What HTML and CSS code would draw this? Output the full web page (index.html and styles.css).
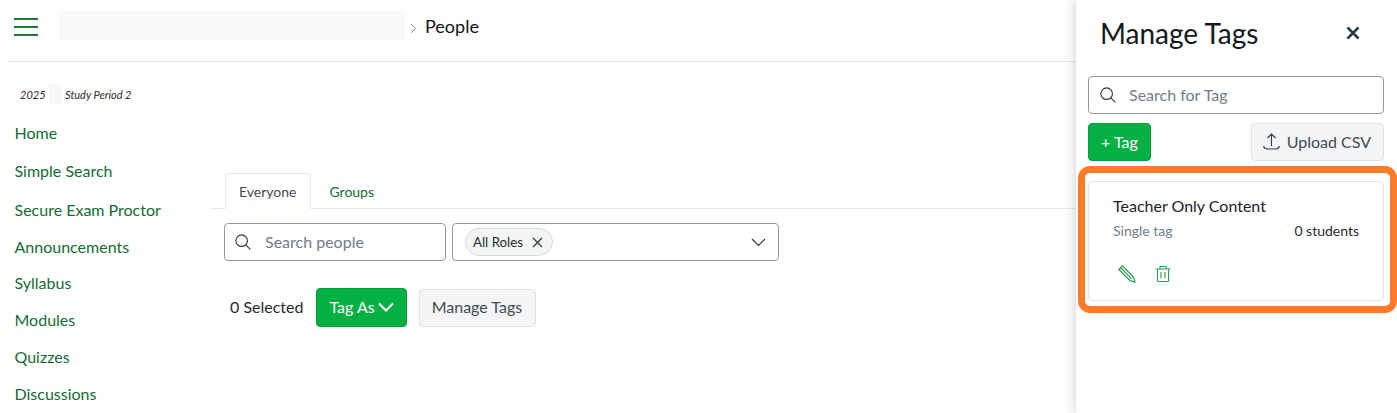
FILE: index.html
```html
<!DOCTYPE html>
<html lang="en">
  <head>
    <meta charset="UTF-8" />
    <title>People</title>
    <link rel="stylesheet" href="styles.css">
  </head>
  <body>
    <div class="page">
      <div class="main">
        <header class="top-bar">
          <div class="hamburger"><span></span><span></span><span></span></div>
          <div class="crumb-blur"></div>
          <svg class="crumb-chevron" width="7" height="11" viewBox="0 0 7 11">
            <path d="M1 1l4.5 4.5L1 10" fill="none" stroke="#8b969e" stroke-width="1" />
          </svg>
          <span class="crumb-current">People</span>
        </header>

        <div class="body-row">
          <nav class="sidebar">
            <div class="course-term">2025 <span class="term-blur"></span> Study Period 2</div>
            <a class="nav-link nav-link-tall">Home</a>
            <a class="nav-link nav-link-tall">Simple Search</a>
            <a class="nav-link">Secure Exam Proctor</a>
            <a class="nav-link">Announcements</a>
            <a class="nav-link">Syllabus</a>
            <a class="nav-link">Modules</a>
            <a class="nav-link">Quizzes</a>
            <a class="nav-link">Discussions</a>
          </nav>

          <section class="content">
            <div class="tabs">
              <div class="tab tab-active">Everyone</div>
              <div class="tab">Groups</div>
            </div>

            <div class="filters">
              <div class="field search-people">
                <svg class="search-icon" width="16" height="16" viewBox="0 0 18 18">
                  <circle cx="7.5" cy="7.5" r="6.5" fill="none" stroke="#2d3b45" stroke-width="1.3" />
                  <path d="M12.2 12.2l5 5" stroke="#2d3b45" stroke-width="1.3" />
                </svg>
                <span class="placeholder">Search people</span>
              </div>
              <div class="field role-select">
                <span class="chip">All Roles
                  <svg width="11" height="11" viewBox="0 0 11 11">
                    <path d="M1 1l9 9M10 1l-9 9" stroke="#2d3b45" stroke-width="1.3" />
                  </svg>
                </span>
                <svg class="select-arrow" width="15" height="9" viewBox="0 0 15 9">
                  <path d="M1 1l6.5 6.5L14 1" fill="none" stroke="#2d3b45" stroke-width="1.2" />
                </svg>
              </div>
            </div>

            <div class="actions">
              <span class="selected-count">0 Selected</span>
              <button class="btn btn-green btn-tag-as">Tag As
                <svg width="16" height="10" viewBox="0 0 16 10">
                  <path d="M1 1.5l7 7 7-7" fill="none" stroke="#ffffff" stroke-width="2" />
                </svg>
              </button>
              <button class="btn btn-grey btn-manage">Manage Tags</button>
            </div>
          </section>
        </div>
      </div>

      <aside class="tray">
        <div class="tray-head">
          <h2>Manage Tags</h2>
          <svg class="tray-close" width="14" height="14" viewBox="0 0 14 14">
            <path d="M1.5 1.5l11 11M12.5 1.5l-11 11" stroke="#2d3b45" stroke-width="2.6" />
          </svg>
        </div>

        <div class="field search-tag">
          <svg class="search-icon" width="16" height="16" viewBox="0 0 18 18">
            <circle cx="7.5" cy="7.5" r="6.5" fill="none" stroke="#2d3b45" stroke-width="1.3" />
            <path d="M12.2 12.2l5 5" stroke="#2d3b45" stroke-width="1.3" />
          </svg>
          <span class="placeholder">Search for Tag</span>
        </div>

        <div class="tray-buttons">
          <button class="btn btn-green">+ Tag</button>
          <button class="btn btn-grey btn-upload">
            <svg width="17" height="18" viewBox="0 0 17 18">
              <path d="M8.5 2V14M4.5 6l4-4 4 4M.5 14c.5 2 2 3 4 3h8c2 0 3.5-1 4-3" fill="none" stroke="#2d3b45" stroke-width="1.1" />
            </svg>
            Upload CSV
          </button>
        </div>

        <div class="highlight">
          <div class="tag-card">
            <div class="tag-name">Teacher Only Content</div>
            <div class="tag-meta">
              <span class="tag-type">Single tag</span>
              <span class="tag-count">0 students</span>
            </div>
            <div class="tag-icons">
              <svg width="18" height="18" viewBox="0 0 18 18">
                <path d="M4.5.8L.8 4.5 12 15.5l5 1.5-1.5-5zM2.8 2.8L13.8 13.8" fill="none" stroke="#22994c" stroke-width="1.2" />
              </svg>
              <svg width="16" height="17" viewBox="0 0 16 17">
                <path d="M.5 4h15M5 4V1.5h6V4M2.5 4v11.5a1 1 0 0 0 1 1h9a1 1 0 0 0 1-1V4M6 7v6.5M10 7v6.5" fill="none" stroke="#2a9d52" stroke-width="1.1" />
              </svg>
            </div>
          </div>
        </div>
      </aside>
    </div>
  </body>
</html>
```

FILE: styles.css
```css
* {
  box-sizing: border-box;
}

body {
  margin: 0;
  font-family: Lato, "Open Sans", sans-serif;
  color: #2d3b45;
  background-color: #ffffff;
}

.page {
  display: flex;
  height: 413px;
  overflow: hidden;
}

.main {
  flex: 1;
  min-width: 0;
}

/* top bar */
.top-bar {
  display: flex;
  align-items: center;
  height: 62px;
  margin-left: 8px;
  padding: 0 0 8px 6px;
  border-bottom: 1px solid #e6e8ea;
}

.hamburger {
  display: flex;
  flex-direction: column;
  gap: 6px;
  width: 24px;
  margin-right: 21px;
}

.hamburger span {
  height: 2px;
  background-color: #1a7a3a;
}

.crumb-blur {
  width: 346px;
  height: 30px;
  margin-bottom: 4px;
  background-color: #f8f9f8;
}

.crumb-chevron {
  margin: 4px 8px 0 5px;
}

.crumb-current {
  margin-bottom: 2px;
  font-size: 18px;
  color: #111111;
}

.body-row {
  display: flex;
}

/* course nav */
.sidebar {
  width: 210px;
  padding: 25px 0 0 14.5px;
}

.course-term {
  display: flex;
  align-items: center;
  height: 14px;
  margin: 0 0 14px 5.5px;
  font-size: 11px;
  font-style: italic;
  color: #2d2d2d;
}

.term-blur {
  width: 12px;
  height: 20px;
  margin: 0 4.5px 0 3px;
  background-color: #f7f7f7;
}

.nav-link {
  display: block;
  height: 36.8px;
  line-height: 36.8px;
  font-size: 16px;
  color: #146b33;
}

.nav-link-tall {
  height: 38.4px;
}

/* people tabs and filters */
.content {
  flex: 1;
  padding-top: 111px;
}

.tabs {
  display: flex;
  gap: 4px;
  height: 36px;
  padding-left: 15px;
  border-bottom: 1px solid #e6e8ea;
}

.tab {
  height: 35px;
  padding: 0 14px 0 13px;
  line-height: 36px;
  font-size: 14px;
  color: #146b33;
  border: 1px solid transparent;
}

.tab-active {
  height: 36px;
  color: #3f4a52;
  background-color: #ffffff;
  border-color: #e6e8ea;
  border-bottom-color: #ffffff;
  border-radius: 3px 3px 0 0;
}

.filters {
  display: flex;
  gap: 6px;
  margin: 14px 0 0 14px;
}

.field {
  display: flex;
  align-items: center;
  height: 38px;
  background-color: #ffffff;
  border: 1px solid #8d99a6;
  border-radius: 4px;
}

.search-people {
  width: 222px;
  padding-left: 10px;
}

.search-icon {
  flex: none;
  margin-right: 14px;
}

.placeholder {
  padding-bottom: 2px;
  font-size: 16px;
  color: #6f7d8a;
}

.role-select {
  justify-content: space-between;
  width: 327px;
  padding: 0 12px 0 12px;
}

.chip {
  display: flex;
  align-items: center;
  gap: 9px;
  height: 28px;
  padding: 0 9px 0 7px;
  font-size: 13.3px;
  color: #1f2a32;
  background-color: #f3f5f5;
  border: 1px solid #d5dadd;
  border-radius: 14px;
}

.actions {
  display: flex;
  align-items: center;
  margin: 27px 0 0 20px;
}

.selected-count {
  margin-right: 13px;
  padding-bottom: 2px;
  font-size: 16px;
  color: #1f2a32;
}

.btn {
  display: inline-flex;
  align-items: center;
  height: 38px;
  padding: 0 12px 2px;
  font-family: inherit;
  font-size: 16px;
  border-radius: 4px;
}

.btn-green {
  color: #ffffff;
  background-color: #03b043;
  border: 1px solid #0a9a3f;
}

.btn-grey {
  color: #3f4a52;
  background-color: #f4f5f6;
  border: 1px solid #dfe2e5;
}

.btn-tag-as {
  gap: 3px;
  height: 39px;
  margin-right: 12px;
}

.btn-manage {
  padding-right: 13px;
}

/* manage tags tray */
.tray {
  flex: none;
  width: 321px;
  padding: 0 0 0 12px;
  background-color: #ffffff;
  box-shadow: -2px 0 10px rgba(0, 0, 0, 0.16);
}

.tray-head {
  display: flex;
  align-items: center;
  justify-content: space-between;
  height: 68px;
  padding: 0 37px 2px 12px;
}

.tray-head h2 {
  margin: 0;
  font-size: 28px;
  font-weight: 400;
  color: #111820;
}

.search-tag {
  width: 296px;
  margin-top: 8px;
  padding-left: 11px;
}

.search-tag .search-icon {
  margin-right: 13px;
}

.tray-buttons {
  display: flex;
  justify-content: space-between;
  width: 296px;
  margin-top: 9px;
}

.btn-upload {
  gap: 7px;
  padding-right: 12px;
  padding-left: 11px;
}

.highlight {
  width: 319px;
  margin: 5px 0 0 -10px;
  padding: 8px 6px 5px 3px;
  border: 7px solid #ff7a29;
  border-radius: 12px;
}

.tag-card {
  height: 120px;
  padding: 14px 24px 0 24px;
  border: 1px solid #dfe2e5;
  border-radius: 4px;
}

.tag-name {
  font-size: 16px;
  line-height: 20px;
  color: #1b232a;
}

.tag-meta {
  display: flex;
  justify-content: space-between;
  margin-top: 6px;
  font-size: 14px;
  line-height: 18px;
}

.tag-type {
  color: #6f7d8a;
}

.tag-count {
  color: #1f2a32;
}

.tag-icons {
  display: flex;
  gap: 19px;
  margin: 25px 0 0 5px;
}
```
